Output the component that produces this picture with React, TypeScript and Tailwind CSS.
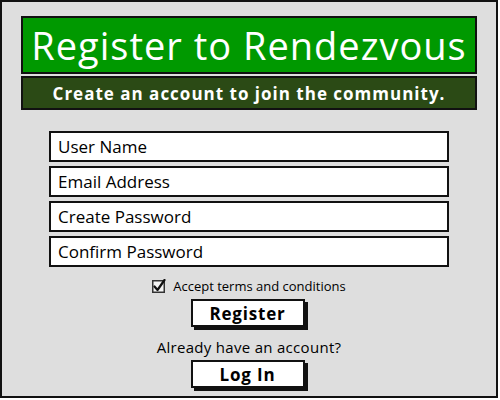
export default function App() {
    const fields = ["User Name", "Email Address", "Create Password", "Confirm Password"];

    return (
        <div className="w-[500px] h-[400px] bg-white">
            <div
                className="w-[498px] h-[398px] bg-[#dedede] border-2 border-[#111] flex flex-col items-center pt-[14px]"
                style={{ fontFamily: "'Open Sans', Lato, sans-serif" }}
            >
                <div className="w-[456px] h-[58px] bg-[#009900] border-2 border-[#111] flex items-center justify-center">
                    <h1 className="text-white text-[38px] leading-none tracking-[1px]">Register to Rendezvous</h1>
                </div>
                <div className="w-[456px] h-[34px] mt-[2px] bg-[#2b4a15] border-2 border-[#111] flex items-center justify-center">
                    <p className="text-white text-[17px] font-bold leading-none tracking-[1px]">
                        Create an account to join the community.
                    </p>
                </div>

                <div className="flex flex-col gap-[4px] mt-[21px]">
                    {fields.map((f) => (
                        <div
                            key={f}
                            className="w-[400px] h-[31px] bg-white border-2 border-[#111] flex items-center px-[7px]"
                        >
                            <span className="text-[17px] text-black leading-none">{f}</span>
                        </div>
                    ))}
                </div>

                <div className="flex items-center gap-[7px] mt-[12px]">
                    <svg width="14" height="14" viewBox="0 0 14 14">
                        <rect x="0.75" y="1.75" width="11.5" height="11.5" fill="#f4f4f4" stroke="#333" strokeWidth="1.5" />
                        <path d="M2.5 7.5 L5.5 11 L12.5 1" fill="none" stroke="#111" strokeWidth="2.2" strokeLinecap="round" strokeLinejoin="round" />
                    </svg>
                    <span className="text-[13px] text-black leading-none">Accept terms and conditions</span>
                </div>

                <button className="mt-[6px] w-[114px] h-[28px] bg-white border-2 border-[#111] shadow-[3px_3px_0_#111] flex items-center justify-center ml-[-3px]">
                    <span className="text-[17px] font-bold text-black leading-none tracking-[0.8px]">Register</span>
                </button>

                <p className="mt-[13px] text-[15px] text-black leading-none tracking-[0.3px]">Already have an account?</p>

                <button className="mt-[5px] w-[114px] h-[28px] bg-white border-2 border-[#111] shadow-[3px_3px_0_#111] flex items-center justify-center ml-[-3px]">
                    <span className="text-[17px] font-bold text-black leading-none tracking-[0.8px]">Log In</span>
                </button>
            </div>
        </div>
    );
}
